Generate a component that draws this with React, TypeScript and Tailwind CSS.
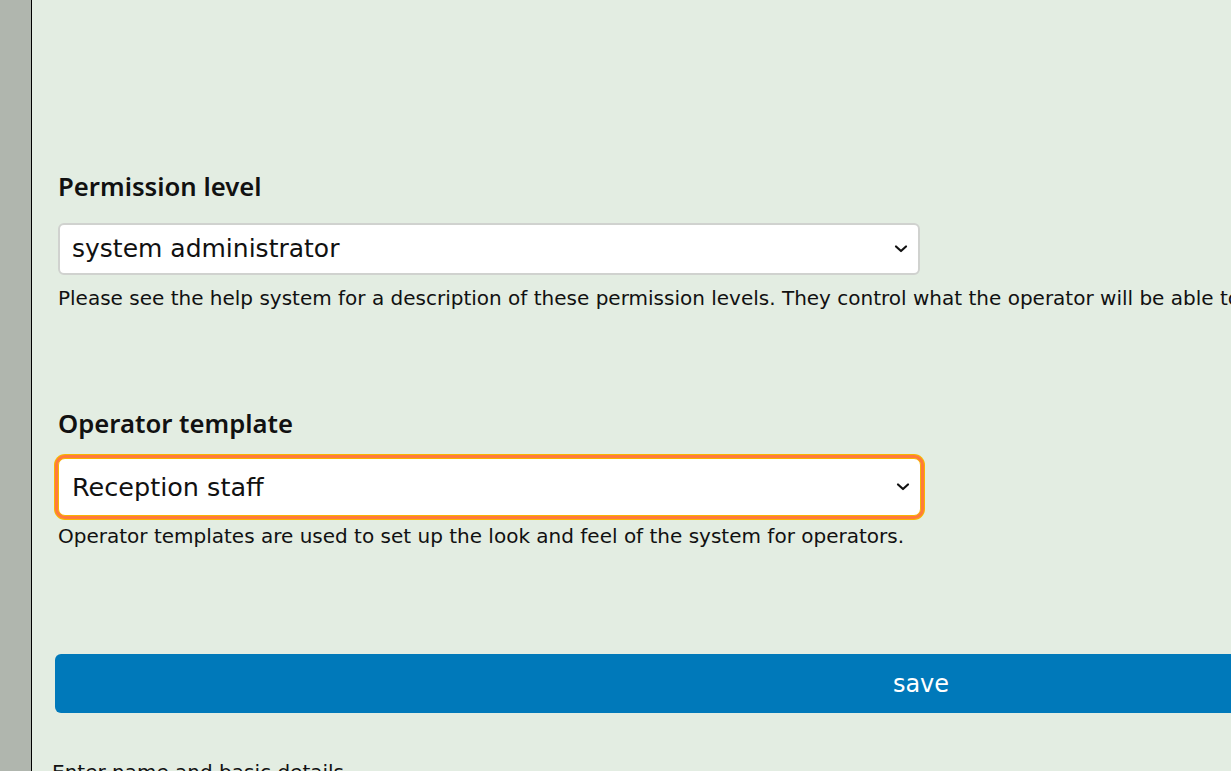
import React from "react";

const Chevron = () => (
  <svg width="14" height="10" viewBox="0 0 14 10" fill="none">
    <path d="M2 2.5 L7 7 L12 2.5" stroke="#111" strokeWidth="2.2" strokeLinecap="round" strokeLinejoin="round" />
  </svg>
);

const body = { fontFamily: '"DejaVu Sans", "Noto Sans", sans-serif' };
const head = { fontFamily: '"Noto Sans", "Open Sans", sans-serif' };

export default function App() {
  return (
    <div className="flex h-[771px] w-[1231px] overflow-hidden bg-[#e3ede2] text-[#111]" style={body}>
      <div className="w-[32px] shrink-0 border-r border-black bg-[#b0b6ae]" />
      <div className="flex min-w-0 flex-1 flex-col pl-[26px] pt-[171px]">
        <div className="h-[32px] shrink-0 text-[25.7px] font-semibold leading-[32px]" style={head}>
          Permission level
        </div>
        <div className="mt-[20px] flex h-[52px] w-[862px] shrink-0 items-center justify-between rounded-[6px] border-2 border-[#d0d2cf] bg-white pl-[12px] pr-[10px]">
          <span className="text-[25px] leading-[30px]">system administrator</span>
          <Chevron />
        </div>
        <div className="mt-[10px] h-[26px] shrink-0 whitespace-nowrap text-[20px] leading-[26px]">
          Please see the help system for a description of these permission levels. They control what the operator will be able to do.
        </div>
        <div className="mt-[97px] h-[32px] shrink-0 text-[25.7px] font-semibold leading-[32px]" style={head}>
          Operator template
        </div>
        <div className="mt-[18px] flex h-[58px] w-[863px] shrink-0 items-center justify-between rounded-[7px] border border-[#f7b500] bg-white pl-[13px] pr-[10px] shadow-[0_0_0_3px_#ff7a3c,0_0_0_4px_#f7b500]">
          <span className="text-[25.5px] leading-[30px]">Reception staff</span>
          <Chevron />
        </div>
        <div className="mt-[7px] h-[26px] shrink-0 whitespace-nowrap text-[20px] leading-[26px]">
          Operator templates are used to set up the look and feel of the system for operators.
        </div>
        <button className="-ml-[3px] mt-[105px] flex h-[59px] w-[1732px] shrink-0 items-center justify-center rounded-[6px] bg-[#0079ba] text-[24px] text-white">
          save
        </button>
        <div className="-ml-[6px] mt-[46px] h-[26px] shrink-0 whitespace-nowrap text-[20px] leading-[26px]">
          Enter name and basic details
        </div>
      </div>
    </div>
  );
}
